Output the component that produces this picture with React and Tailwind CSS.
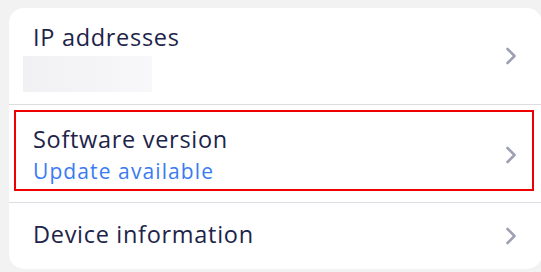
function Chevron() {
  return (
    <svg width="12" height="18" viewBox="0 0 12 18" fill="none" className="shrink-0">
      <path d="M2.5 2 L9.5 9 L2.5 16" stroke="#9ea1b3" strokeWidth="2.6" strokeLinecap="round" strokeLinejoin="round" />
    </svg>
  );
}

function Row({ children, className }) {
  return (
    <div className={`flex items-center justify-between ${className}`}>
      <div className="flex flex-col">{children}</div>
      <Chevron />
    </div>
  );
}

const title = 'text-[23.5px] leading-[28px] text-[#1d2449] tracking-[0.7px]';

export default function App() {
  return (
    <div
      className="w-[541px] h-[272px] bg-[#f2f2f2] pt-[8px] pl-[9px] overflow-hidden"
      style={{ fontFamily: '"Open Sans", "Noto Sans", sans-serif' }}
    >
      <div className="bg-white rounded-[15px] w-[533px] h-[261px] flex flex-col">
        <Row className="h-[97px] border-b border-[#dcdde2] pl-[24px] pr-[25px]">
          <span className={`${title} mt-[3px]`}>IP addresses</span>
          <div className="-ml-[10px] mt-[5px] w-[129px] h-[36px] bg-linear-to-r from-[#f1f1f4] via-[#f4f4f7] to-[#f8f8fa]" />
        </Row>
        <div className="h-[98px] border-b border-[#dcdde2] pt-[5px] pb-[11px] pl-[5px] pr-[8px]">
          <div className="h-full border-2 border-[#ee0000]">
            <Row className="h-full pl-[17px] pr-[15px] pt-[8px]">
              <span className={title}>Software version</span>
              <span className="text-[21px] leading-[26px] text-[#3a7bf2] tracking-[1.1px] mt-[5px]">Update available</span>
            </Row>
          </div>
        </div>
        <Row className="flex-1 pl-[24px] pr-[25px]">
          <span className={`${title} -mt-[5px]`}>Device information</span>
        </Row>
      </div>
    </div>
  );
}
